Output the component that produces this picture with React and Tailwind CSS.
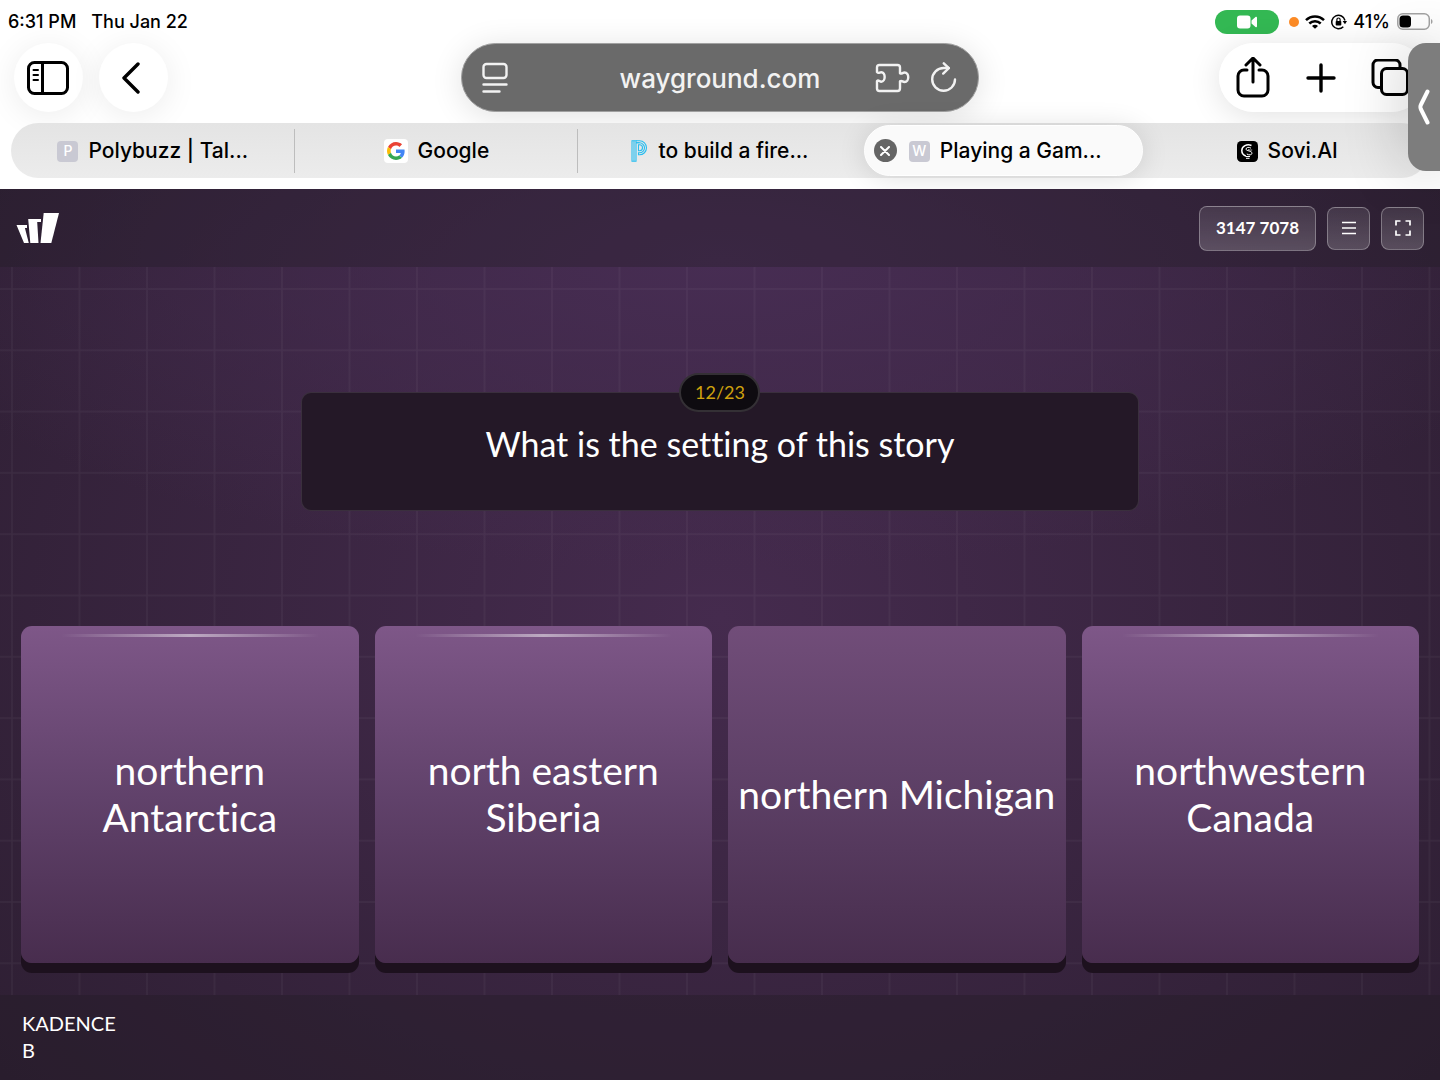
const tabs = [
  { title: "Polybuzz | Tal...", icon: <LetterIcon letter="P" /> },
  { title: "Google", icon: <GoogleIcon /> },
  { title: "to build a fire...", icon: <PIcon /> },
  { title: "Playing a Gam...", icon: <LetterIcon letter="W" />, active: true },
  { title: "Sovi.AI", icon: <SoviIcon /> },
];

const answers = [
  { text: "northern Antarctica" },
  { text: "north eastern Siberia" },
  { text: "northern Michigan", pressed: true },
  { text: "northwestern Canada" },
];

function LetterIcon({ letter }) {
  return (
    <span className="flex size-[21px] items-center justify-center rounded-[4px] bg-[#c9c9d3] text-sm font-medium text-white">
      {letter}
    </span>
  );
}

function GoogleIcon() {
  return (
    <span className="flex size-6 items-center justify-center rounded-[4px] bg-white">
      <svg className="size-[18px]" viewBox="0 0 48 48">
        <path fill="#EA4335" d="M24 9.500c3.500 0 6.700 1.200 9.200 3.600l6.900-6.900C35.900 2.400 30.500 0 24 0 14.600 0 6.500 5.400 2.600 13.200l8 6.200C12.400 13.700 17.700 9.500 24 9.500z" />
        <path fill="#4285F4" d="M47 24.600c0-1.600-.2-3.100-.4-4.600H24v9h12.900c-.6 3-2.200 5.500-4.700 7.200l7.700 6C44.400 38 47 31.800 47 24.600z" />
        <path fill="#FBBC05" d="M10.500 28.600c-.5-1.500-.8-3-.8-4.600s.3-3.100.8-4.600l-8-6.200C.9 16.500 0 20.100 0 24s.9 7.500 2.600 10.800l7.900-6.200z" />
        <path fill="#34A853" d="M24 48c6.500 0 11.900-2.100 15.900-5.800l-7.700-6c-2.200 1.500-4.900 2.300-8.200 2.300-6.300 0-11.600-4.200-13.500-9.900l-7.900 6.200C6.500 42.600 14.600 48 24 48z" />
      </svg>
    </span>
  );
}

function PIcon() {
  return (
    <svg className="h-[22px] w-[17px]" viewBox="0 0 17 22" fill="none" stroke="#26bdf0" strokeWidth="1.100">
      <path d="M1 .8h4v20.400H1zM3 1v20" />
      <path d="M5 .8h3.500a7 7 0 0 1 0 14H7.500v-2h1a5 5 0 0 0 0-10H5" />
      <path d="M7.500 4.800h1a3 3 0 0 1 0 6h-1zM5 2.800h3.500" />
    </svg>
  );
}

function SoviIcon() {
  return (
    <svg className="size-[21px]" viewBox="0 0 21 21" fill="none" stroke="#fff">
      <rect width="21" height="21" rx="4.500" fill="#000" stroke="none" />
      <path d="M14.500 4.500C10 2.500 4.800 5 4.800 9.500c0 2.800 1.700 4.600 4 5.500" strokeWidth="1.500" />
      <path d="M14 7.200c-2-1.500-5-.9-5 .9 0 2.100 6 1.400 6 4.100 0 1.800-3 2.300-5.200.8M8.500 15.500h4.500M9 17.300h3.500" strokeWidth="1" />
      <path d="M11 8.500c1.500.6 3 .8 4.200.5" strokeWidth=".7" />
    </svg>
  );
}

function StatusBar() {
  return (
    <div className="flex h-[43px] items-center justify-between pl-2 pr-[7px] text-[18px] font-medium">
      <div className="flex gap-[15px]">
        <span>6:31 PM</span>
        <span>Thu Jan 22</span>
      </div>
      <div className="flex items-center">
        <span className="mr-[10px] flex h-6 w-16 items-center justify-center rounded-full bg-[#33b853]">
          <svg className="h-[14px] w-5" viewBox="0 0 20 14" fill="#fff">
            <rect x="0" y=".5" width="13.500" height="13" rx="3" />
            <path d="M14.500 5.500 18.500 2.100c.7-.6 1.500-.3 1.500.6v8.600c0 .9-.8 1.200-1.500.6l-4-3.400z" />
          </svg>
        </span>
        <span className="mr-[6px] size-[10px] rounded-full bg-[#fc8b26]" />
        <svg className="mr-[6px] h-[14px] w-5" viewBox="0 0 20 14" fill="none" stroke="#000" strokeWidth="2.500">
          <path d="M1 5.200c5-5 13-5 18 0" />
          <path d="M4.300 8.500c3.200-3.100 8.200-3.100 11.400 0" />
          <path d="M10 13.800 7 10.900c1.700-1.500 4.300-1.500 6 0z" fill="#000" stroke="none" />
        </svg>
        <svg className="mr-[6px] size-4" viewBox="0 0 16 16" fill="none" stroke="#000" strokeWidth="1.500">
          <path d="M12.300 12.700A6.700 6.700 0 1 1 14 6.500" />
          <path d="M11.600 7H16l-2 3.200z" fill="#000" stroke="none" />
          <rect x="4.700" y="7" width="5.600" height="4.500" rx=".8" fill="#000" stroke="none" />
          <path d="M5.900 7V5.600a1.600 1.600 0 0 1 3.200 0V7" strokeWidth="1.200" />
        </svg>
        <span className="mr-[7px]">41%</span>
        <svg className="h-[17px] w-9" viewBox="0 0 36 17">
          <rect x=".8" y=".8" width="31.500" height="15.400" rx="5" fill="none" stroke="#a3a3a3" strokeWidth="1.500" />
          <rect x="2.500" y="2.500" width="11.500" height="12" rx="3.500" fill="#000" />
          <path d="M34 6c2 .8 2 4.200 0 5z" fill="#a3a3a3" />
        </svg>
      </div>
    </div>
  );
}

function Toolbar() {
  return (
    <div className="flex h-[69px] items-center justify-between px-[14px]">
      <div className="flex flex-1 gap-4">
        <button aria-label="Sidebar" className="flex size-[69px] items-center justify-center rounded-full bg-white shadow-[0_4px_32px_rgba(0,0,0,0.08)]">
          <svg className="mr-[2px] h-[34px] w-[42px]" viewBox="0 0 42 34" fill="none" stroke="#000" strokeWidth="3" strokeLinecap="round">
            <rect x="1.500" y="1.500" width="39" height="31" rx="6" />
            <path d="M15.500 2v30" />
            <path d="M6.500 9h4.500M6.500 14h4.500M6.500 19h4.500" strokeWidth="2" />
          </svg>
        </button>
        <button aria-label="Back" className="flex size-[69px] items-center justify-center rounded-full bg-white shadow-[0_4px_32px_rgba(0,0,0,0.08)]">
          <svg className="mr-[6px] h-[32px] w-[18px]" viewBox="0 0 18 32" fill="none" stroke="#000" strokeWidth="3.400" strokeLinecap="round" strokeLinejoin="round">
            <path d="M16 2 2 16l14 14" />
          </svg>
        </button>
      </div>

      <div className="flex h-[69px] w-[518px] items-center rounded-full border border-[#a0a0a0] bg-[#6a6a6a] px-5 shadow-[0_4px_32px_rgba(0,0,0,0.12)]">
        <button aria-label="Page menu" className="w-[84px]">
          <svg className="h-[32px] w-[28px]" viewBox="0 0 28 32" fill="none" stroke="#f2f2f2" strokeWidth="2.400" strokeLinecap="round">
            <rect x="1.500" y="2" width="23" height="14" rx="3" />
            <path d="M1.500 22.500h23M1.500 29.500h16" />
          </svg>
        </button>
        <input
          aria-label="Address"
          defaultValue="wayground.com"
          className="h-10 min-w-0 flex-1 bg-transparent pt-[2px] text-center text-[26px] font-medium text-[#f2f2f2] outline-none"
        />
        <div className="flex w-[84px] items-center justify-between">
          <button aria-label="Extensions">
            <svg className="h-[30px] w-[36px]" viewBox="0 0 36 30" fill="none" stroke="#f2f2f2" strokeWidth="2.400" strokeLinejoin="round">
              <path d="M3 9V4.500Q3 2 5.500 2h18Q26 2 26 4.500v5.700c1.800 1.300 2.500-.7 4.500-.7 5 0 5 9.500 0 9.500-2 0-2.700-2-4.500-.7v7Q26 28 23.500 28h-18Q3 28 3 25.500V18c1.500-1.500 2.500.7 4.200.7 4.600 0 4.600-9.500 0-9.500C5.500 9.200 4.500 11 3 9z" />
            </svg>
          </button>
          <button aria-label="Reload">
            <svg className="h-[32px] w-[28px]" viewBox="0 0 28 32" fill="none" stroke="#f2f2f2" strokeWidth="2.400" strokeLinecap="round" strokeLinejoin="round">
              <path d="M25 17.500A11.400 11.400 0 1 1 13.600 6h5" />
              <path d="m13.800 1.300 5 4.900-5.600 5.400" />
            </svg>
          </button>
        </div>
      </div>

      <div className="flex flex-1 justify-end">
        <div className="flex h-[69px] w-[207px] items-center rounded-full bg-white/90 pr-[2px] shadow-[0_4px_32px_rgba(0,0,0,0.12)]">
          <button aria-label="Share" className="flex flex-1 justify-center">
            <svg className="h-[42px] w-[34px]" viewBox="0 0 34 42" fill="none" stroke="#000" strokeWidth="3" strokeLinecap="round" strokeLinejoin="round">
              <path d="M11 13H8a6 6 0 0 0-6 6v14a6 6 0 0 0 6 6h18a6 6 0 0 0 6-6V19a6 6 0 0 0-6-6h-3" />
              <path d="M17 25V2M10 8l7-7 7 7" />
            </svg>
          </button>
          <button aria-label="New tab" className="flex flex-1 justify-center">
            <svg className="size-[30px]" viewBox="0 0 30 30" fill="none" stroke="#000" strokeWidth="3.400" strokeLinecap="round">
              <path d="M15 2v26M2 15h26" />
            </svg>
          </button>
          <button aria-label="Tab overview" className="flex flex-1 justify-center">
            <svg className="size-[38px]" viewBox="0 0 38 38" fill="none" stroke="#000" strokeWidth="3" strokeLinejoin="round">
              <path d="M9 28.500H7a5 5 0 0 1-5-5V6a5 5 0 0 1 5-5h17a5 5 0 0 1 5 5v2" />
              <rect x="10.500" y="9.500" width="26" height="26" rx="5" />
            </svg>
          </button>
        </div>
      </div>
    </div>
  );
}

function TabBar() {
  return (
    <div className="mx-[11px] my-[11px] grid h-[55px] grid-cols-5 rounded-full bg-linear-to-b from-[#e4e4e4] to-[#ececec]">
      {tabs.map((tab, index) => (
        <div
          key={tab.title}
          className={
            tab.active
              ? "m-[2px] flex items-center gap-3 rounded-full border border-white bg-[#fafafa] pl-[9px] shadow-[0_2px_28px_rgba(0,0,0,0.12)]"
              : "relative flex items-center justify-center"
          }
        >
          {tab.active && (
            <button aria-label="Close tab" className="flex size-[23px] items-center justify-center rounded-full bg-[#656565]">
              <svg className="size-[10px]" viewBox="0 0 10 10" stroke="#fff" strokeWidth="2" strokeLinecap="round">
                <path d="m1 1 8 8M9 1 1 9" />
              </svg>
            </button>
          )}
          <button className="flex items-center gap-[10px] whitespace-nowrap pt-px text-[21px] font-medium">
            {tab.icon}
            {tab.title}
          </button>
          {index < 2 && <span className="absolute right-0 h-11 w-px bg-[#bdbdbd]" />}
        </div>
      ))}
    </div>
  );
}

function GameHeader() {
  const button =
    "flex items-center justify-center rounded-lg border border-white/30 bg-linear-to-b from-white/10 to-white/20 text-white";

  return (
    <header className="relative flex h-[78px] items-center justify-between bg-[#231c26]/35 px-4">
      <svg className="h-[30px] w-[44px]" viewBox="0 0 44 30" fill="#fff">
        <path d="M.5 12h10.500v3H8.900L12.800 30H8z" />
        <path d="M12.200 6H25v3h-3.800L22.500 30h-8.200z" />
        <path d="M27.700 0H43l-7.700 30H24.500z" />
      </svg>
      <div className="flex items-center gap-[11px]">
        <button className={`${button} h-[45px] w-[117px] text-[17px] font-bold`}>3147 7078</button>
        <button aria-label="Menu" className={`${button} size-[43px]`}>
          <svg className="size-4" viewBox="0 0 16 16" stroke="#fff" strokeWidth="1.500">
            <path d="M1 2.500h14M1 8h14M1 13.500h14" />
          </svg>
        </button>
        <button aria-label="Fullscreen" className={`${button} size-[43px]`}>
          <svg className="size-4" viewBox="0 0 16 16" fill="none" stroke="#fff" strokeWidth="1.700">
            <path d="M1 5.500V1h4.500M10.500 1H15v4.500M15 10.500V15h-4.500M5.500 15H1v-4.500" />
          </svg>
        </button>
      </div>
    </header>
  );
}

function GridLines() {
  return (
    <svg className="absolute inset-0 size-full" aria-hidden="true">
      <defs>
        <pattern id="grid" x="11" y="21" width="67.500" height="61.300" patternUnits="userSpaceOnUse">
          <path d="M1 0v61.300M0 1h67.500" fill="none" stroke="#fff" strokeOpacity=".045" strokeWidth="1.500" />
        </pattern>
      </defs>
      <rect width="100%" height="100%" fill="url(#grid)" />
    </svg>
  );
}

function Answer({ text, pressed }) {
  return (
    <button
      className={`relative flex aspect-square items-center justify-center rounded-[11px] px-1 text-center text-[39px] leading-[47px] text-white shadow-[0_10px_0_#1d111e] ${
        pressed
          ? "bg-linear-to-b from-[#714d79] via-[#5c3f65] to-[#472d4d]"
          : "bg-linear-to-b from-[#7e5788] via-[#61426b] to-[#482d4e]"
      }`}
    >
      {!pressed && (
        <span className="absolute inset-x-10 top-2 h-[3px] bg-linear-to-r from-transparent via-white/50 to-transparent" />
      )}
      {text}
    </button>
  );
}

export default function App() {
  return (
    <div className="relative flex min-h-screen flex-col bg-white font-['Inter',sans-serif] text-black">
      <StatusBar />
      <Toolbar />
      <TabBar />

      <div className="flex flex-1 flex-col bg-[radial-gradient(ellipse_60%_35%_at_50%_8%,#472d53_0%,transparent_100%),radial-gradient(ellipse_65%_80%_at_50%_48%,#452b4e_0%,#2e1f33_100%)] font-['Lato',sans-serif] [font-variant-ligatures:none]">
        <GameHeader />

        <main className="relative flex flex-1 flex-col justify-between px-[21px] pb-8 pt-[125px]">
          <GridLines />

          <section className="relative mx-auto flex h-[119px] w-3/5 flex-col items-center rounded-[10px] border border-white/10 bg-[#241827]">
            <span className="absolute -top-5 flex h-[39px] w-[81px] items-center justify-center rounded-full border-2 border-[#343035] bg-[#0e0b10] text-[18px] text-[#cfa20e]">
              12/23
            </span>
            <h1 className="mt-[31px] text-[34px] leading-10 text-white">What is the setting of this story</h1>
          </section>

          <div className="relative grid grid-cols-4 gap-4">
            {answers.map((answer) => (
              <Answer key={answer.text} {...answer} />
            ))}
          </div>
        </main>

        <footer className="h-[85px] bg-[#231c26]/40 px-[22px] pt-[15px] text-[20px] leading-[27px] text-white">
          <p>KADENCE</p>
          <p>B</p>
        </footer>
      </div>

      <button
        aria-label="Show side panel"
        className="absolute right-0 top-[43px] flex h-32 w-8 items-center justify-center rounded-l-[18px] bg-[#7d7d7d] shadow-[0_0_60px_rgba(0,0,0,0.25)]"
      >
        <svg className="h-9 w-3" viewBox="0 0 12 36" fill="none" stroke="#fff" strokeWidth="4" strokeLinecap="round" strokeLinejoin="round">
          <path d="M9.500 2.500 2.800 16q-.8 2 0 4L9.500 33.500" />
        </svg>
      </button>
    </div>
  );
}
